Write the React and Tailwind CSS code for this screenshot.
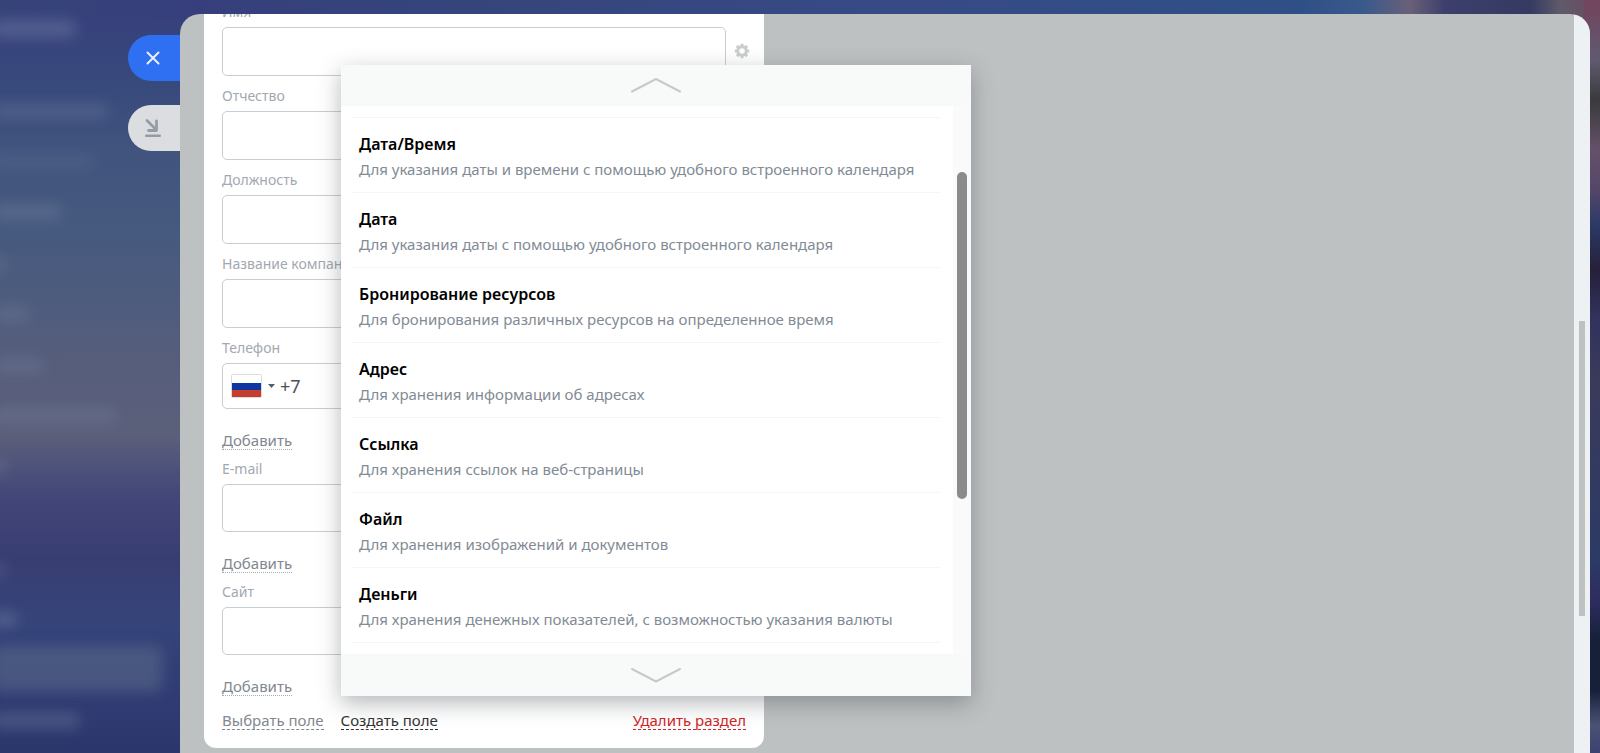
import React from "react";

const fieldTypes = [
  { title: "Дата/Время", text: "Для указания даты и времени с помощью удобного встроенного календаря" },
  { title: "Дата", text: "Для указания даты с помощью удобного встроенного календаря" },
  { title: "Бронирование ресурсов", text: "Для бронирования различных ресурсов на определенное время" },
  { title: "Адрес", text: "Для хранения информации об адресах" },
  { title: "Ссылка", text: "Для хранения ссылок на веб-страницы" },
  { title: "Файл", text: "Для хранения изображений и документов" },
  { title: "Деньги", text: "Для хранения денежных показателей, с возможностью указания валюты" },
];

const menuBars = [
  "top-[20px] w-[84px] h-[17px] bg-white/15",
  "top-[103px] w-[116px] h-[15px] bg-white/10",
  "top-[154px] w-[102px] h-[15px] bg-white/5",
  "top-[204px] w-[70px] h-[16px] bg-white/10",
  "top-[256px] w-[14px] h-[16px] bg-white/10",
  "top-[306px] w-[38px] h-[16px] bg-[#8090b0]/25",
  "top-[358px] w-[52px] h-[15px] bg-[#8090b0]/25",
  "top-[408px] w-[126px] h-[16px] bg-[#8090b0]/25",
  "top-[459px] w-[14px] h-[16px] bg-white/10",
  "top-[562px] w-[14px] h-[16px] bg-white/10",
  "top-[612px] w-[25px] h-[15px] bg-white/15",
  "top-[646px] w-[170px] h-[46px] bg-[#6b7c90]/40",
  "top-[713px] w-[88px] h-[15px] bg-white/15",
];

function Backdrop() {
  return (
    <div aria-hidden="true" className="absolute inset-0 overflow-hidden bg-[linear-gradient(180deg,#363f7c_0px,#384a7c_90px,#41547e_150px,#475a7e_250px,#545d7c_340px,#5b5f7a_435px,#4a4f7a_475px,#424578_500px,#383d71_560px,#35447a_620px,#303c74_690px,#2b376b_753px)]">
      <div className="absolute inset-x-0 top-0 h-5 bg-[linear-gradient(90deg,#364379_0px,#363f7c_200px,#35467c_500px,#364a86_900px,#2f5086_1300px,#3a5a8c_1365px,#6a6078_1410px,#3d3f6c_1445px,#353a62_1530px,#5f5a6b_1560px,#70475f_1600px)]" />
      <div className="absolute inset-y-0 right-0 w-4 bg-[linear-gradient(180deg,#70475f_10px,#5f5a70_60px,#3a3a3c_100px,#66506a_150px,#54466a_190px,#2b3a66_225px,#261f3a_270px,#32335e_320px,#3a3a5a_380px,#2b3a66_560px,#2f2c60_600px,#16203a_640px,#16203a_690px,#4a5275_725px,#3a4270_753px)]" />
      {menuBars.map((bar) => (
        <span key={bar} className={"absolute -left-2 rounded-md blur-[7px] " + bar} />
      ))}
    </div>
  );
}

function Field({ id, label, boxClass, children }) {
  return (
    <div>
      <label htmlFor={id} className="block h-5 text-[14px] leading-5 text-[#a3a8b0]">{label}</label>
      <div className={"mt-[5px] rounded-[5px] border border-[#c6cdd3] bg-white " + boxClass}>
        {children || <input id={id} className="h-full w-full rounded-[5px] px-3 outline-none" />}
      </div>
    </div>
  );
}

function AddButton() {
  return (
    <button type="button" className="mt-[21px] mb-[9px] block h-5 border-b border-dotted border-[#a8adb4] text-[15px] leading-[20px] text-[#828790]">
      Добавить
    </button>
  );
}

function Chevron({ down }) {
  return (
    <svg width="52" height="18" viewBox="0 0 52 18" fill="none" stroke="#c6c9ce" strokeWidth="2" strokeLinecap="round" strokeLinejoin="round">
      <path d={down ? "M2 3 26 15.5 50 3" : "M2 14.5 26 2 50 14.5"} />
    </svg>
  );
}

function FormCard() {
  return (
    <form className="w-[560px] rounded-b-xl bg-white pr-[18px] pb-[17px] pl-[18px]">
      <div className="flex flex-col gap-[10px]">
        <div className="-mt-3 -mr-1 flex">
          <div className="flex-1">
            <Field id="name" label="Имя" boxClass="h-[49px]" />
          </div>
          <button type="button" aria-label="Настройки поля" className="mt-[41px] ml-2 h-4 w-4 self-start">
            <svg width="16" height="16" viewBox="0 0 16 16">
              <circle cx="8" cy="8" r="4.300" fill="none" stroke="#cbcdcf" strokeWidth="3" />
              <g stroke="#cbcdcf" strokeWidth="3">
                <path d="M8 .8V4M8 12v3.200M.8 8H4M12 8h3.200M2.900 2.900l2.200 2.200M10.900 10.900l2.200 2.200M2.900 13.100l2.200-2.200M10.900 5.100l2.200-2.200" />
              </g>
            </svg>
          </button>
        </div>
        <Field id="patronymic" label="Отчество" boxClass="mr-5 h-[49px]" />
        <Field id="position" label="Должность" boxClass="mr-5 h-[49px]" />
        <Field id="company" label="Название компании" boxClass="mr-5 h-[49px]" />
        <Field id="phone" label="Телефон" boxClass="mr-5 flex h-[46px] items-center">
          <button type="button" aria-label="Код страны" className="ml-2 flex items-center">
            <svg width="31" height="24" viewBox="0 0 31 24">
              <rect x="0.5" y="0.5" width="30" height="23" rx="1" fill="#fff" stroke="#dcdcdc" />
              <path fill="#1135a0" d="M1 9h29v7H1z" />
              <path fill="#c43d2d" d="M1 16h29v7H1z" />
            </svg>
            <svg className="ml-[6px]" width="7" height="4" viewBox="0 0 7 4">
              <path d="M0 0h7L3.500 4z" fill="#535c69" />
            </svg>
          </button>
          <input id="phone" defaultValue="+7" className="ml-[5px] min-w-0 flex-1 text-[18px] text-[#4b515b] outline-none" />
        </Field>
      </div>
      <AddButton />
      <Field id="email" label="E-mail" boxClass="mr-5 h-[48px]" />
      <AddButton />
      <Field id="site" label="Сайт" boxClass="mr-5 h-[48px]" />
      <AddButton />
      <div className="mt-[15px] flex h-5 items-start text-[15px] leading-[19px]">
        <button type="button" className="h-[19px] border-b border-dashed border-[#828790] text-[#828790]">Выбрать поле</button>
        <button type="button" className="ml-[17px] h-[19px] border-b border-dashed border-[#333] text-[#333]">Создать поле</button>
        <button type="button" className="ml-auto h-[19px] border-b border-dashed border-[#d02525] text-[#d02525]">Удалить раздел</button>
      </div>
    </form>
  );
}

function TypePopup() {
  return (
    <div className="absolute top-[51px] left-[161px] w-[630px] bg-white shadow-[0_7px_21px_rgba(60,65,70,0.38)]">
      <button type="button" aria-label="Прокрутить вверх" className="flex h-[41px] w-full items-center justify-center bg-[#f8faf9]">
        <Chevron />
      </button>
      <div className="flex">
        <ul className="mt-[11px] mr-[13px] mb-[11px] ml-[11px] flex-1 border-t border-[#f5f6f7]">
          {fieldTypes.map((item) => (
            <li key={item.title} className="border-b border-[#f5f6f7]">
              <button type="button" className="flex h-[74px] w-full flex-col pt-[14px] pl-[7px] text-left">
                <span className="text-[16px] leading-[24px] font-semibold text-black">{item.title}</span>
                <span className="text-[15px] leading-[26px] whitespace-nowrap text-[#828b95]">{item.text}</span>
              </button>
            </li>
          ))}
        </ul>
        <div className="w-[18px] bg-[#fafafa] pt-[66px] pl-1">
          <div className="h-[327px] w-[10px] rounded-full bg-[#8b8b8b]" />
        </div>
      </div>
      <button type="button" aria-label="Прокрутить вниз" className="flex h-[42px] w-full items-center justify-center bg-[#f8faf9]">
        <Chevron down />
      </button>
    </div>
  );
}

export default function App() {
  return (
    <div className="relative flex min-h-screen overflow-hidden font-['Noto_Sans','Open_Sans',sans-serif]">
      <Backdrop />
      <div className="relative flex w-[180px] shrink-0 flex-col items-end gap-6 pt-[35px]">
        <button type="button" aria-label="Закрыть" className="flex h-[46px] w-[52px] items-center rounded-l-full bg-[#2f70f2] pl-[18px]">
          <svg width="14" height="14" viewBox="0 0 14 14" stroke="#e9f0ff" strokeWidth="2" strokeLinecap="round">
            <path d="M1.500 1.500 12.500 12.500M12.500 1.500 1.500 12.500" />
          </svg>
        </button>
        <button type="button" aria-label="Свернуть" className="flex h-[46px] w-[52px] items-center rounded-l-full bg-[#dcdde1] pl-4">
          <svg width="18" height="20" viewBox="0 0 18 20" fill="none" stroke="#959ca4" strokeWidth="2.800" strokeLinecap="round" strokeLinejoin="round">
            <path d="M3 2.500 12 11.500M12.500 3V12.500H4.500" />
            <path d="M2.200 17.800H15.800" strokeWidth="2.400" />
          </svg>
        </button>
      </div>
      <main className="relative mt-[14px] mr-[10px] flex flex-1">
        <div className="flex flex-1 overflow-hidden rounded-t-[20px] bg-[#bdc1c2]">
          <div className="flex-1 pl-6">
            <FormCard />
          </div>
          <div className="w-4 bg-[#edf1f4] pt-[307px] pl-[5px]">
            <div className="h-[295px] w-[6px] bg-[#bdc1c2]" />
          </div>
        </div>
        <TypePopup />
      </main>
    </div>
  );
}
